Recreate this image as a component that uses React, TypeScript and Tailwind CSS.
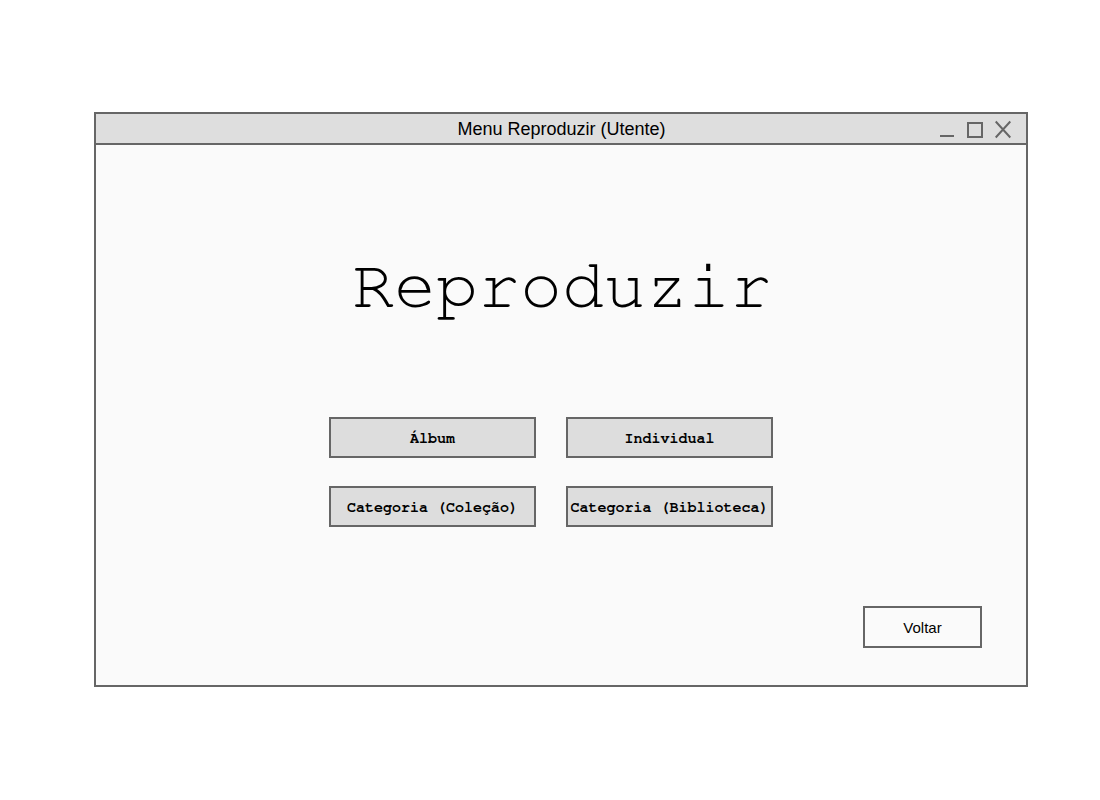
import React from "react";

const mono = "font-['Nimbus_Mono_PS','FreeMono','Courier_New','Liberation_Mono',monospace]";

function Btn({ label }: { label: string }) {
  return (
    <div className={`w-[207px] h-[41px] border-2 border-[#666666] bg-[#dddddd] flex items-center justify-center pt-[3px] ${mono} font-bold text-[15px] text-black whitespace-nowrap`}>
      {label}
    </div>
  );
}

export default function App() {
  return (
    <div className="w-[1100px] h-[800px] bg-white pt-[112px] pl-[94px]">
      <div className="w-[934px] h-[575px] border-2 border-[#666666] bg-[#fafafa] flex flex-col">
        <div className="h-[31px] border-b-2 border-[#666666] bg-[#dedede] relative flex items-center justify-center pt-[2px] font-['Liberation_Sans',Arial,sans-serif] text-[18px] text-black">
          <span className="ml-[1px]">Menu Reproduzir (Utente)</span>
          <div className="absolute right-[15px] top-0 h-[29px] flex items-start">
            <svg width="14" height="29" viewBox="0 0 14 29">
              <line x1="0" y1="22" x2="14" y2="22" stroke="#666" strokeWidth="2" />
            </svg>
            <svg width="16" height="29" viewBox="0 0 16 29" className="ml-[13px]">
              <rect x="1" y="9" width="14" height="14" fill="none" stroke="#666" strokeWidth="2" />
            </svg>
            <svg width="16" height="29" viewBox="0 0 16 29" className="ml-[12px]">
              <path d="M0.7 7.5 L15.3 23.5 M15.3 7.5 L0.7 23.5" stroke="#666" strokeWidth="2" />
            </svg>
          </div>
        </div>
        <div className="flex-1 flex flex-col">
          <div className={`mt-[106px] h-[70px] leading-[70px] text-center ${mono} text-[70px] text-black ml-[2px]`}>
            Reproduzir
          </div>
          <div className="mt-[96px] ml-[233px] grid grid-cols-[207px_207px] gap-x-[30px] gap-y-[28px]">
            <Btn label="Álbum" />
            <Btn label="Individual" />
            <Btn label="Categoria (Coleção)" />
            <Btn label="Categoria (Biblioteca)" />
          </div>
          <div className="mt-[79px] flex justify-end pr-[44px]">
            <div className="w-[119px] h-[42px] border-2 border-[#666666] flex items-center justify-center pt-[2px] font-['Liberation_Sans',Arial,sans-serif] text-[15px] text-black">
              Voltar
            </div>
          </div>
        </div>
      </div>
    </div>
  );
}
